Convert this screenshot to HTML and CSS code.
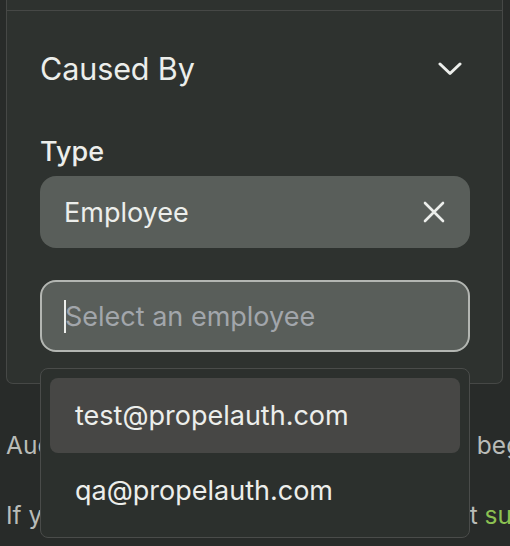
FILE: index.html
```html
<!DOCTYPE html>
<html lang="en">
<head>
<meta charset="utf-8">
<title>Caused By</title>
<link rel="stylesheet" href="styles.css">
</head>
<body>
<div class="page">
  <div class="card">
    <div class="prev-section"></div>
    <div class="section">
      <div class="section-head">
        <span class="section-title">Caused By</span>
        <svg class="chevron" width="24" height="14" viewBox="0 0 24 14"><path d="M2 2 L12 11.5 L22 2" fill="none" stroke="#eceeeb" stroke-width="3" stroke-linecap="round" stroke-linejoin="round"/></svg>
      </div>
      <div class="label">Type</div>
      <div class="field filled">
        <span>Employee</span>
        <svg class="clear" width="22" height="22" viewBox="0 0 22 22"><path d="M2 2 L20 20 M20 2 L2 20" fill="none" stroke="#eceeeb" stroke-width="2.6" stroke-linecap="round"/></svg>
      </div>
      <div class="field select">
        <span class="caret"></span><span class="placeholder">Select an employee</span>
      </div>
    </div>
  </div>
  <p class="note">Audit logs for events in this organization begin</p>
  <p class="note">If you have any billing questions, contact <a class="link">support</a></p>
  <div class="dropdown">
    <div class="option active">test@propelauth.com</div>
    <div class="option">qa@propelauth.com</div>
  </div>
</div>
</body>
</html>
```
FILE: styles.css
```css
html, body {
  margin: 0;
  padding: 0;
  background: #282b29;
  font-family: "Inter", "Noto Sans", sans-serif;
  color: #eceeeb;
  overflow: hidden;
}
.page {
  position: relative;
  width: 510px;
  height: 546px;
  overflow: hidden;
}
.card {
  margin-left: 6px;
  width: 497px;
  box-sizing: border-box;
  background: #2e322f;
  border: 1px solid #464846;
  border-top: none;
  border-radius: 0 0 7px 7px;
}
.prev-section {
  height: 10px;
  border-bottom: 1px solid #464846;
}
.section {
  padding: 38px 32px 31px 33px;
}
.section-head {
  display: flex;
  align-items: center;
  justify-content: space-between;
  height: 40px;
  padding-right: 8px;
}
.section-title {
  font-size: 30.5px;
  line-height: 40px;
  letter-spacing: -0.1px;
}
.chevron { display: block; }
.label {
  margin-top: 47px;
  font-size: 27px;
  font-weight: 500;
  line-height: 32px;
}
.field {
  margin-top: 8px;
  height: 72px;
  box-sizing: border-box;
  border-radius: 16px;
  background: #595e5a;
  display: flex;
  align-items: center;
  padding: 0 25px 0 24px;
  font-size: 27px;
}
.filled {
  justify-content: space-between;
}
.select {
  margin-top: 32px;
  border: 2px solid #b3b6b2;
  padding-left: 22px;
}
.caret {
  display: inline-block;
  width: 2px;
  height: 33px;
  background: #eceeeb;
  margin-right: -1px;
}
.placeholder {
  color: #a2a6ab;
}
.note {
  margin: 43px 0 0 6px;
  font-size: 24.5px;
  line-height: 36px;
  color: #b9bcb8;
  white-space: nowrap;
}
.note + .note {
  margin-top: 34px;
}
.link {
  color: #8cc152;
}
.dropdown {
  position: absolute;
  left: 40px;
  top: 368px;
  width: 430px;
  box-sizing: border-box;
  padding: 9px;
  background: #2c302d;
  border: 1px solid #4a4c4a;
  border-radius: 8px;
}
.option {
  height: 75px;
  display: flex;
  align-items: center;
  padding-left: 25px;
  font-size: 27px;
  border-radius: 8px;
}
.option.active {
  background: #474745;
}
```
